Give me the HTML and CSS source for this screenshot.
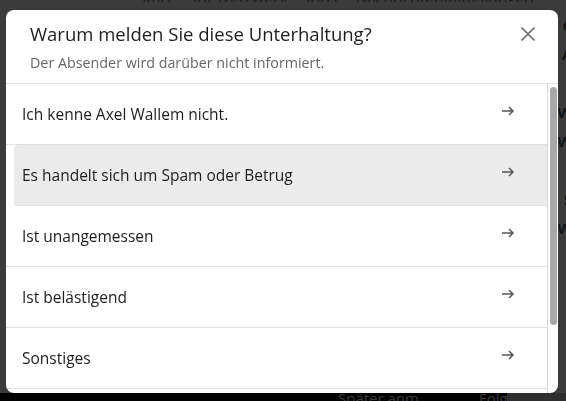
FILE: index.html
```html
<!DOCTYPE html>
<html lang="de">
<head>
    <meta charset="UTF-8">
    <meta name="viewport" content="width=device-width, initial-scale=1.0">
    <title>Unterhaltung melden</title>
    <link rel="stylesheet" href="styles.css">
</head>
<body>
    <div class="page">
        <nav class="topnav">
            <span class="nav-start">Start</span>
            <span class="nav-net">Ihr Netzwerk</span>
            <span class="nav-jobs">Jobs</span>
            <span class="nav-msg">NachrichtenMitteilungen</span>
        </nav>
        <div class="side-right">
            <span>C</span><span>A</span><span>I</span><span>W</span><span>W</span><span>I</span><span>S</span><span>W</span><span>I</span>
        </div>
        <div class="bottombar">
            <div class="bottom-dark">
                <span>Später anm.</span>
                <span>Folgen</span>
            </div>
            <div class="bottom-grey"></div>
        </div>
    </div>

    <div class="modal" role="dialog">
        <div class="modal-header">
            <h2 class="modal-title">Warum melden Sie diese Unterhaltung?</h2>
            <p class="modal-sub">Der Absender wird darüber nicht informiert.</p>
            <button class="close-btn" aria-label="Schließen">
                <svg width="16" height="16" viewBox="0 0 16 16">
                    <path d="M1.5 1.5 L14.5 14.5 M14.5 1.5 L1.5 14.5" stroke="#666" stroke-width="1.6" fill="none"/>
                </svg>
            </button>
        </div>
        <div class="modal-body">
            <ul class="reasons">
                <li class="reason"><span>Ich kenne Axel Wallem nicht.</span><svg class="arrow" width="16" height="16" viewBox="0 0 16 16"><path d="M2 8 H13 M9 4 L13 8 L9 12" stroke="#555" stroke-width="1.5" fill="none"/></svg></li>
                <li class="reason hover"><span>Es handelt sich um Spam oder Betrug</span><svg class="arrow" width="16" height="16" viewBox="0 0 16 16"><path d="M2 8 H13 M9 4 L13 8 L9 12" stroke="#555" stroke-width="1.5" fill="none"/></svg></li>
                <li class="reason"><span>Ist unangemessen</span><svg class="arrow" width="16" height="16" viewBox="0 0 16 16"><path d="M2 8 H13 M9 4 L13 8 L9 12" stroke="#555" stroke-width="1.5" fill="none"/></svg></li>
                <li class="reason"><span>Ist belästigend</span><svg class="arrow" width="16" height="16" viewBox="0 0 16 16"><path d="M2 8 H13 M9 4 L13 8 L9 12" stroke="#555" stroke-width="1.5" fill="none"/></svg></li>
                <li class="reason"><span>Sonstiges</span><svg class="arrow" width="16" height="16" viewBox="0 0 16 16"><path d="M2 8 H13 M9 4 L13 8 L9 12" stroke="#555" stroke-width="1.5" fill="none"/></svg></li>
                <li class="reason"><span>Ich möchte mich abmelden</span><svg class="arrow" width="16" height="16" viewBox="0 0 16 16"><path d="M2 8 H13 M9 4 L13 8 L9 12" stroke="#555" stroke-width="1.5" fill="none"/></svg></li>
            </ul>
            <div class="scrollbar">
                <div class="thumb"></div>
            </div>
        </div>
    </div>
</body>
</html>
```

FILE: styles.css
```css
body {
    font-family: "Open Sans", "Noto Sans", sans-serif;
    margin: 0;
    padding: 0;
    height: 100vh;
    overflow: hidden;
    background-color: #3b3b3b;
}
.page {
    height: 401px;
    display: flex;
    flex-direction: column;
}
.topnav {
    display: flex;
    height: 9px;
    line-height: 10px;
    margin-top: -7px;
    font-size: 16px;
    color: #1e1e1e;
    overflow: hidden;
    white-space: nowrap;
}
.nav-start {
    margin-left: 137px;
}
.nav-net {
    margin-left: 20px;
}
.nav-jobs {
    margin-left: 18px;
}
.nav-msg {
    margin-left: 18px;
    letter-spacing: -0.3px;
}
.side-right {
    flex: 1;
    display: flex;
    flex-direction: column;
    align-items: flex-end;
    gap: 11px;
    padding-top: 14px;
    font-size: 15px;
    font-weight: bold;
    color: #151515;
    line-height: 18px;
    margin-right: -6px;
}
.bottombar {
    display: flex;
    height: 8px;
    overflow: hidden;
}
.bottom-dark {
    width: 507px;
    background-color: #000;
    display: flex;
    gap: 56px;
    padding-left: 338px;
    box-sizing: border-box;
    font-size: 15px;
    color: #3a3a3a;
    line-height: 10px;
    white-space: nowrap;
}
.bottom-grey {
    flex: 1;
    background-color: #2e2e2e;
}
.modal {
    position: fixed;
    top: 10px;
    left: 6px;
    width: 552px;
    height: 383px;
    background-color: #fff;
    border-radius: 8px;
    display: flex;
    flex-direction: column;
    overflow: hidden;
}
.modal-header {
    position: relative;
    padding: 12px 56px 10px 24px;
    border-bottom: 1px solid #e0e0e0;
}
.modal-title {
    margin: 0;
    font-size: 18.5px;
    font-weight: normal;
    line-height: 24px;
    color: #1d1d1d;
}
.modal-sub {
    margin: 7px 0 0;
    font-size: 14.3px;
    line-height: 20px;
    color: #666;
}
.close-btn {
    position: absolute;
    top: 16px;
    right: 22px;
    width: 32px;
    height: 32px;
    margin: -8px;
    padding: 8px;
    border: none;
    background: none;
    cursor: pointer;
}
.modal-body {
    flex: 1;
    display: flex;
    min-height: 0;
}
.reasons {
    list-style: none;
    margin: 0;
    padding: 0;
    flex: 1;
    overflow: hidden;
}
.scrollbar {
    width: 11px;
    box-sizing: border-box;
    border-left: 1px solid #d6d6d6;
    padding: 3px 0 0 2px;
}
.thumb {
    width: 7px;
    height: 238px;
    border-radius: 4px;
    background-color: #a8a8a8;
}
.reason {
    display: flex;
    align-items: center;
    justify-content: space-between;
    height: 60px;
    padding: 0 31px 0 16px;
    border-bottom: 1px solid #e0e0e0;
    font-size: 15.5px;
    color: #1d1d1d;
    cursor: pointer;
}
.reason .arrow {
    margin-top: -6px;
}
.reason.hover {
    margin-left: 8px;
    padding-left: 8px;
    background-color: #ebebeb;
    border-radius: 4px 0 0 4px;
}
```
